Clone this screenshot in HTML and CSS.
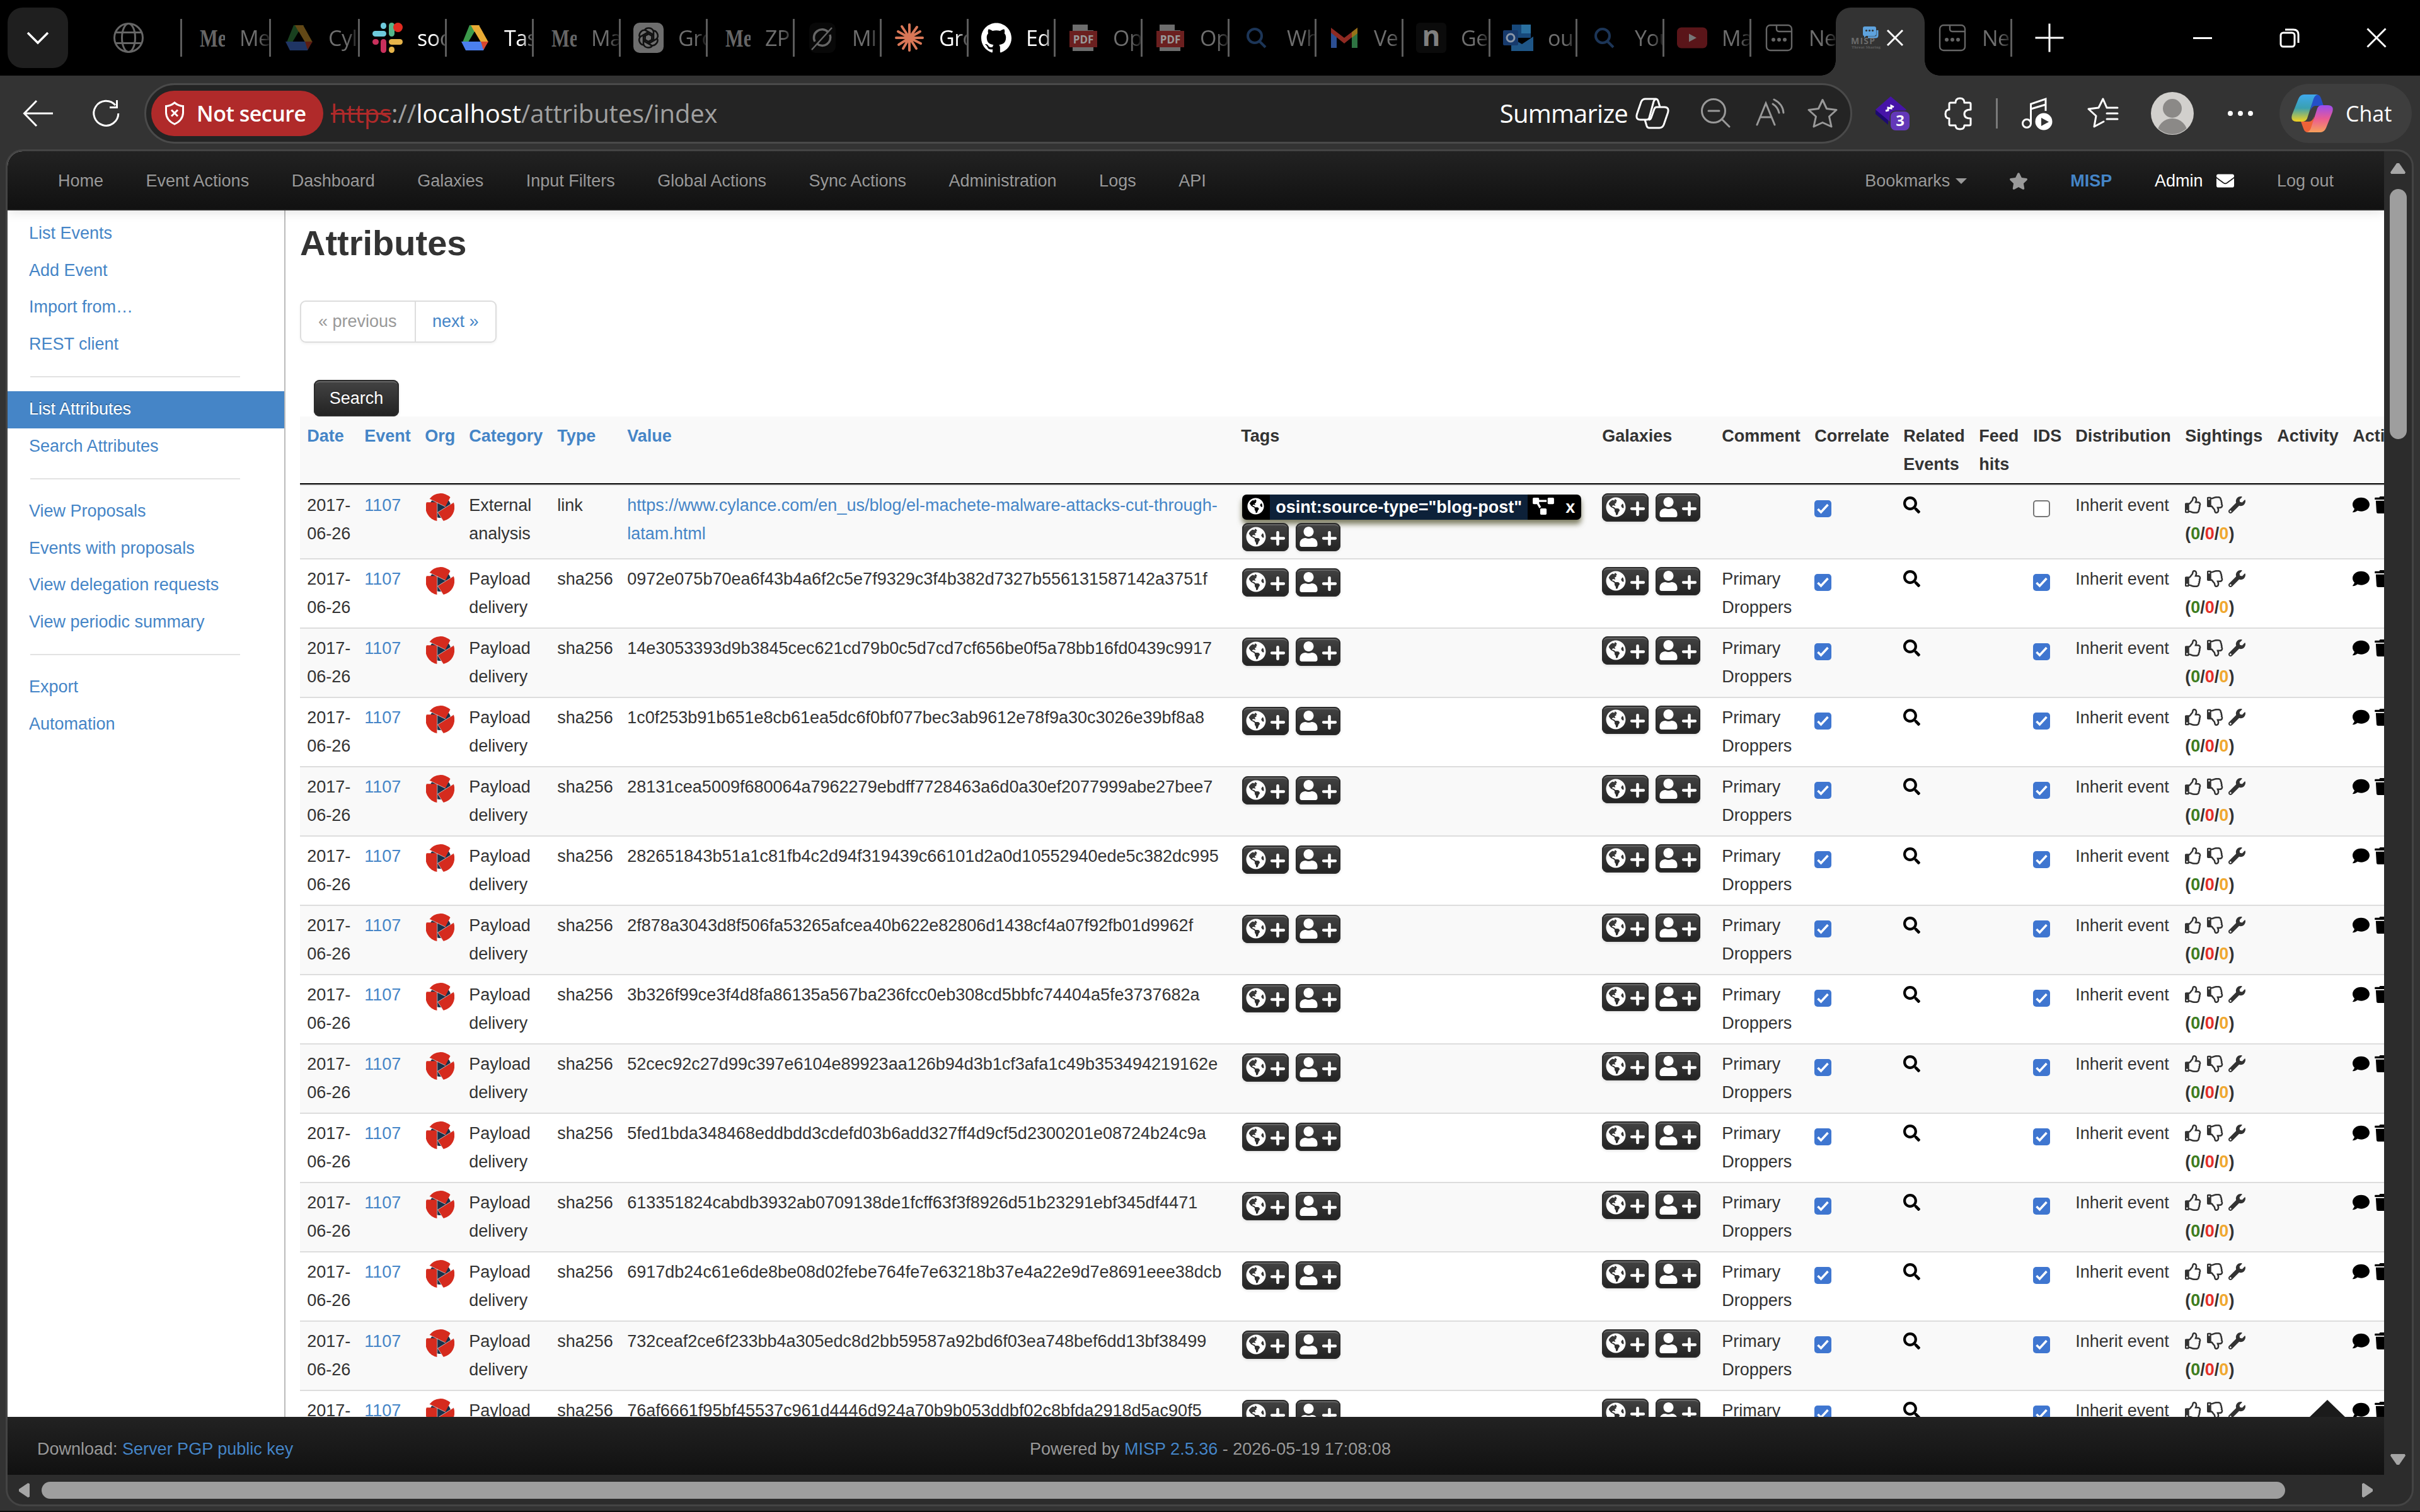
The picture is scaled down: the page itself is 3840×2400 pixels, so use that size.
FILE: index.html
```html
<!DOCTYPE html>
<html lang="en">
<head>
<meta charset="utf-8">
<title>Attributes - MISP</title>
<link rel="stylesheet" href="styles.css">
</head>
<body>
<svg class="defs" aria-hidden="true">
  <symbol id="globe" viewBox="0 0 496 512"><path d="M248 8C111.03 8 0 119.03 0 256s111.03 248 248 248 248-111.03 248-248S384.97 8 248 8zm82.29 357.6c-3.9 3.88-7.99 7.95-11.31 11.28-2.99 3-5.1 6.7-6.17 10.71-1.51 5.66-2.73 11.38-4.77 16.87l-17.39 46.85c-13.76 3-28 4.69-42.65 4.69v-27.38c1.69-12.62-7.64-36.26-22.63-51.25-6-6-9.37-14.14-9.37-22.63v-32.01c0-11.64-6.27-22.34-16.46-27.97-14.37-7.95-34.81-19.06-48.81-26.11-11.48-5.78-22.1-13.14-31.65-21.75l-.8-.72a114.792 114.792 0 0 1-18.06-20.74c-9.38-13.77-24.66-36.42-34.59-51.14 20.47-45.5 57.36-82.04 103.2-101.89l24.01 12.01C203.48 89.74 216 82.01 216 70.11v-11.3c7.99-1.29 16.12-2.11 24.39-2.42l28.3 28.3c6.25 6.25 6.25 16.38 0 22.63L264 112l-10.34 10.34c-3.12 3.12-3.12 8.19 0 11.31l4.69 4.69c3.12 3.12 3.12 8.19 0 11.31l-8 8a8.008 8.008 0 0 1-5.66 2.34h-8.99c-2.08 0-4.08.81-5.58 2.27l-9.92 9.65a8.008 8.008 0 0 0-1.58 9.31l15.59 31.19c2.66 5.32-1.21 11.58-7.15 11.58h-5.64c-1.93 0-3.79-.7-5.24-1.96l-9.28-8.06a16.017 16.017 0 0 0-15.55-3.1l-31.17 10.39a11.95 11.95 0 0 0-8.17 11.34c0 4.53 2.56 8.66 6.61 10.69l11.08 5.54c9.41 4.71 19.79 7.16 30.31 7.16s22.59 27.29 32 32h66.75c8.49 0 16.62 3.37 22.63 9.37l13.69 13.69a30.503 30.503 0 0 1 8.93 21.57 46.536 46.536 0 0 1-13.72 32.98zM417 274.25c-5.79-1.45-10.84-5-14.15-9.97l-17.98-26.97a23.97 23.97 0 0 1 0-26.62l19.59-29.38c2.32-3.47 5.5-6.29 9.24-8.15l12.98-6.49C440.2 193.59 448 223.87 448 256c0 8.67-.74 17.16-1.82 25.54L417 274.25z"/></symbol>
  <symbol id="user" viewBox="0 0 448 512"><path d="M224 256c70.7 0 128-57.3 128-128S294.7 0 224 0 96 57.3 96 128s57.3 128 128 128zm89.6 32h-16.7c-22.2 10.2-46.9 16-72.9 16s-50.6-5.8-72.9-16h-16.7C60.2 288 0 348.2 0 422.4V464c0 26.5 21.5 48 48 48h352c26.5 0 48-21.5 48-48v-41.6c0-74.2-60.2-134.4-134.4-134.4z"/></symbol>
  <symbol id="plus" viewBox="0 0 23 23"><path d="M11.5 2.2v18.6M2.2 11.5h18.6" fill="none" stroke="currentColor" stroke-width="4.6" stroke-linecap="round"/></symbol>
  <symbol id="search" viewBox="0 0 512 512"><path d="M505 442.7L405.3 343c-4.5-4.5-10.6-7-17-7H372c27.6-35.3 44-79.7 44-128C416 93.1 322.9 0 208 0S0 93.1 0 208s93.1 208 208 208c48.3 0 92.7-16.4 128-44v16.3c0 6.4 2.5 12.5 7 17l99.7 99.7c9.4 9.4 24.6 9.4 33.9 0l28.3-28.3c9.4-9.4 9.4-24.6.1-34zM208 336c-70.7 0-128-57.2-128-128 0-70.7 57.2-128 128-128 70.7 0 128 57.2 128 128 0 70.7-57.2 128-128 128z"/></symbol>
  <symbol id="wrench" viewBox="0 0 512 512"><path d="M507.73 109.1c-2.24-9.03-13.54-12.09-20.12-5.51l-74.36 74.36-67.88-11.31-11.31-67.88 74.36-74.36c6.62-6.62 3.43-17.9-5.66-20.16-47.38-11.74-99.55.91-136.58 37.93-39.64 39.64-50.55 97.1-34.05 147.2L18.74 402.76c-24.99 24.99-24.99 65.51 0 90.5 24.99 24.99 65.51 24.99 90.5 0l213.21-213.21c50.12 16.71 107.47 5.68 147.37-34.22 37.07-37.07 49.7-89.32 37.91-136.73zM64 472c-13.25 0-24-10.75-24-24 0-13.26 10.75-24 24-24s24 10.74 24 24c0 13.25-10.75 24-24 24z"/></symbol>
  <symbol id="thumb" viewBox="0 0 512 512"><path d="M466.27 286.69C475.04 271.84 480 256 480 236.85c0-44.015-37.218-85.58-85.82-85.58H357.7c4.92-12.81 8.85-28.13 8.85-46.54C366.55 31.936 328.86 0 271.28 0c-61.607 0-58.093 94.933-71.76 108.6-22.747 22.747-49.615 66.447-68.76 83.4H32c-17.673 0-32 14.327-32 32v240c0 17.673 14.327 32 32 32h64c14.893 0 27.408-10.174 30.978-23.95 44.509 1.001 75.06 39.94 177.802 39.94 7.22 0 15.22.01 22.22.01 77.117 0 111.986-39.423 112.94-95.33 13.319-18.425 20.299-43.122 17.34-66.99 9.854-18.452 13.664-40.343 8.99-62.99zm-61.75 53.83c12.56 21.13 1.26 49.41-13.94 57.57 7.7 48.78-17.608 65.9-53.12 65.9h-37.82c-71.639 0-118.029-37.82-171.64-37.82V240h10.92c28.36 0 67.98-70.89 94.54-97.46 28.36-28.36 18.91-75.63 37.82-94.54 47.27 0 47.27 32.98 47.27 56.73 0 39.17-28.36 56.72-28.36 94.54h103.99c21.11 0 37.73 18.91 37.82 37.82.09 18.9-12.82 37.81-22.27 37.81 13.489 14.555 16.371 45.236-5.21 65.62zM88 432c0 13.255-10.745 24-24 24s-24-10.745-24-24 10.745-24 24-24 24 10.745 24 24z"/></symbol>
  <symbol id="comment" viewBox="0 0 512 512"><path d="M256 32C114.6 32 0 125.1 0 240c0 49.6 21.4 95 57 130.7C44.5 421.1 2.7 466 2.2 466.5c-2.2 2.3-2.8 5.7-1.5 8.7S4.8 480 8 480c66.3 0 116-31.8 140.6-51.4 32.7 12.3 69 19.4 107.4 19.4 141.4 0 256-93.1 256-208S397.4 32 256 32z"/></symbol>
  <symbol id="trash" viewBox="0 0 448 512"><path d="M432 32H312l-9.4-18.7A24 24 0 0 0 281.1 0H166.8a23.72 23.72 0 0 0-21.4 13.3L136 32H16A16 16 0 0 0 0 48v32a16 16 0 0 0 16 16h416a16 16 0 0 0 16-16V48a16 16 0 0 0-16-16zM53.2 467a48 48 0 0 0 47.9 45h245.8a48 48 0 0 0 47.9-45L416 128H32z"/></symbol>
  <symbol id="star" viewBox="0 0 576 512"><path d="M259.3 17.8L194 150.2 47.9 171.5c-26.2 3.8-36.7 36.1-17.7 54.6l105.7 103-25 145.5c-4.5 26.3 23.2 46 46.4 33.7L288 439.6l130.7 68.7c23.2 12.2 50.9-7.4 46.4-33.7l-25-145.5 105.7-103c19-18.5 8.5-50.8-17.7-54.6L382 150.2 316.7 17.8c-11.7-23.6-45.6-23.9-57.4 0z"/></symbol>
  <symbol id="envelope" viewBox="0 0 512 512"><path d="M502.3 190.8c3.9-3.1 9.7-.2 9.7 4.7V400c0 26.5-21.5 48-48 48H48c-26.5 0-48-21.5-48-48V195.6c0-5 5.7-7.8 9.7-4.7 22.4 17.4 52.1 39.5 154.1 113.6 21.1 15.4 56.7 47.8 92.2 47.6 35.7.3 72-32.8 92.3-47.6 102-74.1 131.6-96.3 154-113.7zM256 320c23.2.4 56.6-29.2 73.4-41.4 132.7-96.3 142.8-104.7 173.4-128.7 5.8-4.5 9.2-11.5 9.2-18.9v-19c0-26.5-21.5-48-48-48H48c-26.5 0-48 21.5-48 48v19c0 7.4 3.4 14.3 9.2 18.9 30.6 23.9 40.7 32.4 173.4 128.7 16.8 12.2 50.2 41.8 73.4 41.4z"/></symbol>
  <symbol id="diagram" viewBox="0 0 640 512"><path d="M384 320H256c-17.67 0-32 14.33-32 32v128c0 17.67 14.33 32 32 32h128c17.67 0 32-14.33 32-32V352c0-17.67-14.33-32-32-32zM192 32c0-17.67-14.33-32-32-32H32C14.33 0 0 14.33 0 32v128c0 17.67 14.33 32 32 32h95.72l73.16 128.04C211.98 300.98 232.4 288 256 288h.28L192 175.51V128h224V64H192V32zM608 0H480c-17.67 0-32 14.33-32 32v128c0 17.67 14.33 32 32 32h128c17.67 0 32-14.33 32-32V32c0-17.67-14.33-32-32-32z"/></symbol>
  <symbol id="org" viewBox="0 0 45 45">
    <circle cx="22.500" cy="23" r="17" fill="#17324a"/>
    <g fill="#d52b1e">
      <path d="M5.500 10A22 22 0 0 1 38.500 7.300L30.700 22.300z"/>
      <path d="M.8 15.200H17.500V45A22.300 22.300 0 0 1 .8 15.200z"/>
      <path d="M18.500 31.200L43.800 15.500A22.300 22.300 0 0 1 27.500 45z"/>
    </g>
    <path d="M5.500 10L30.700 22.300M17.800 15.500V45M18.500 31.200L43.800 15.500M18.500 31.200L27.500 45" stroke="#e9e4e4" stroke-width=".7"/>
  </symbol>
  <symbol id="drive" viewBox="0 0 48 48"><path fill="#3fa24f" d="M16 4h16L13 38 5 31z" opacity=".95"/><path fill="#e9ab35" d="M18 4h13l15 27H33z"/><path fill="#4b7fee" d="M3 30h42l-7 14H10z"/><path fill="#d8462f" d="M34 30h12l-8 13z"/><path fill="#000" d="M24 14l9.500 16h-19z"/></symbol>
  <symbol id="slack" viewBox="0 0 48 48"><g fill="#6ecadc"><rect x="13" y="0" width="9" height="10" rx="4.500"/><rect x="0" y="13" width="22" height="9" rx="4.500"/></g><g fill="#56b68b"><rect x="26" y="0" width="9" height="22" rx="4.500"/></g><g fill="#e02b20"><rect x="33" y="0" width="15" height="15" rx="7.500"/></g><g fill="#c9305c"><rect x="0" y="26" width="10" height="9" rx="4.500"/><rect x="13" y="26" width="9" height="22" rx="4.500"/></g><g fill="#e6b44a"><rect x="26" y="26" width="22" height="9" rx="4.500"/><rect x="26" y="38" width="9" height="10" rx="4.500"/></g></symbol>
  <symbol id="gpt" viewBox="0 0 48 48"><rect width="48" height="48" rx="10" fill="#6e6e6e"/><g fill="none" stroke="#111" stroke-width="2.600"><g id="petal"><path d="M18 12c2-5 12-5 14 2v12l-8 4"/></g><use href="#petal" transform="rotate(60 24 24)"/><use href="#petal" transform="rotate(120 24 24)"/><use href="#petal" transform="rotate(180 24 24)"/><use href="#petal" transform="rotate(240 24 24)"/><use href="#petal" transform="rotate(300 24 24)"/></g></symbol>
  <symbol id="grok" viewBox="0 0 48 48"><rect x="3" width="42" height="48" rx="10" fill="#080808"/><g fill="none" stroke="#666" stroke-width="3.500"><path d="M33 15a13 13 0 0 0-21 15M15 33a13 13 0 0 0 21-14"/><path d="M7 43L39 8" stroke-width="2.500"/></g></symbol>
  <symbol id="claude" viewBox="0 0 48 48"><g stroke="#d97757" stroke-width="4" stroke-linecap="round"><path d="M24 24V3M24 24v20M24 24H3M24 24h21M24 24L12 6M24 24L36 7M24 24L6 14M24 24l17-10M24 24L7 35M24 24l18 9M24 24L14 41M24 24l11 17"/></g></symbol>
  <symbol id="github" viewBox="0 0 24 24"><path fill="#fff" d="M12 .297c-6.630 0-12 5.373-12 12 0 5.303 3.438 9.800 8.205 11.385.6.113.82-.258.82-.577 0-.285-.01-1.040-.015-2.040-3.338.724-4.042-1.610-4.042-1.610C4.422 18.070 3.633 17.700 3.633 17.700c-1.087-.744.084-.729.084-.729 1.205.084 1.838 1.236 1.838 1.236 1.070 1.835 2.809 1.305 3.495.998.108-.776.417-1.305.76-1.605-2.665-.3-5.466-1.332-5.466-5.930 0-1.310.465-2.380 1.235-3.220-.135-.303-.54-1.523.105-3.176 0 0 1.005-.322 3.300 1.230.96-.267 1.980-.399 3-.405 1.020.006 2.040.138 3 .405 2.280-1.552 3.285-1.230 3.285-1.230.645 1.653.24 2.873.12 3.176.765.840 1.230 1.910 1.230 3.220 0 4.610-2.805 5.625-5.475 5.920.42.36.81 1.096.81 2.220 0 1.606-.015 2.896-.015 3.286 0 .315.21.69.825.57C20.565 22.092 24 17.592 24 12.297c0-6.627-5.373-12-12-12"/></symbol>
  <symbol id="glass" viewBox="0 0 48 48"><g fill="none" stroke="#1c3557" stroke-width="4"><circle cx="20" cy="21" r="11"/><path d="M28 30l9 9"/></g></symbol>
  <symbol id="gmail" viewBox="0 0 48 48"><path fill="#2c4f93" d="M3 13l9 7v20H3z"/><path fill="#2e7442" d="M36 20l9-7v27h-9z"/><path fill="#8f2a22" d="M3 8l21 16L45 8v8L24 33 3 16z"/><path fill="#967318" d="M36 15l9-7v9l-9 7z"/></symbol>
  <symbol id="outlook" viewBox="0 0 48 48"><path fill="#17487a" d="M14 3h30v21H14z"/><path fill="#2a70a0" d="M29 3h15v14H29z"/><path fill="#1f5687" d="M13 24l17 10 18-12v23H13z"/><rect y="12" width="24" height="24" rx="2" fill="#173a6c"/><circle cx="12" cy="24" r="6" fill="none" stroke="#8b97a8" stroke-width="3"/></symbol>
  <symbol id="youtube" viewBox="0 0 48 48"><rect y="7.500" width="48" height="33" rx="7" fill="#5a1519"/><path fill="#777" d="M19 17.500v13l12-6.500z"/></symbol>
  <symbol id="newtab" viewBox="0 0 48 48"><g fill="none" stroke="#666" stroke-width="2.400"><rect x="4" y="4" width="40" height="40" rx="6"/><path d="M20 4v6q0 4 4 4h20"/></g><g fill="#666"><circle cx="15" cy="27" r="3"/><circle cx="24" cy="27" r="3"/><circle cx="33" cy="27" r="3"/></g></symbol>
</svg>

<header class="tabstrip" id="tabstrip">
  <button class="tab-search" aria-label="Search tabs"><svg width="40" height="26" viewBox="0 0 40 26"><path d="M4 5l16 16L36 5" fill="none" stroke="#fff" stroke-width="3.500"/></svg></button>
  <div class="pinned"><svg width="48" height="48" viewBox="0 0 48 48"><g fill="none" stroke="#666" stroke-width="3"><circle cx="24" cy="24" r="22.500"/><ellipse cx="24" cy="24" rx="10.500" ry="22.500"/><path d="M3.500 15.500h41M3.500 32.500h41"/></g></svg></div>
  <div class="tabs" id="tabs"></div>
  <svg class="new-tab" width="48" height="48" viewBox="0 0 48 48"><path d="M24 1.500v45M1.500 24h45" stroke="#fff" stroke-width="3"/></svg>
  <div class="window-buttons">
    <svg width="32" height="32" viewBox="0 0 32 32"><path d="M1 16.500h30" stroke="#fff" stroke-width="3"/></svg>
    <svg width="32" height="32" viewBox="0 0 32 32"><g fill="none" stroke="#fff" stroke-width="3"><rect x="2" y="8" width="22" height="22" rx="4"/><path d="M9 3h13q8 0 8 8v13"/></g></svg>
    <svg width="32" height="32" viewBox="0 0 32 32"><path d="M1.500 1.500l29 29M30.500 1.500l-29 29" stroke="#fff" stroke-width="3"/></svg>
  </div>
</header>

<div class="toolbar">
  <svg width="48" height="48" viewBox="0 0 48 48"><path d="M22 4L2.500 24 22 44M2.500 24H48" fill="none" stroke="#fff" stroke-width="3"/></svg>
  <svg class="reload" width="48" height="48" viewBox="0 0 48 48"><path d="M39 11A19.500 19.500 0 1 0 43.800 24M41.500 3v11.500H30" fill="none" stroke="#fff" stroke-width="3"/></svg>
  <div class="address">
    <div class="insecure"><svg width="34" height="38" viewBox="0 0 34 38"><path d="M17 2q6 5 13.500 5.500V18Q30 30 17 36 4 30 3.500 18V7.500Q11 7 17 2zM12 13.500l10 10M22 13.500l-10 10" fill="none" stroke="#fff" stroke-width="3"/></svg><span>Not secure</span></div>
    <div class="url"><span class="scheme">https</span>://<span class="host">localhost</span>/attributes/index</div>
    <div class="summarize"><span>Summarize</span>
      <svg width="54" height="50" viewBox="0 0 54 50"><g fill="none" stroke="#fff" stroke-width="3" stroke-linejoin="round"><path d="M16 2H32q3 0 4 3l3 10M16 2Q11 2 9 7L2.500 26Q0 35 8 35H18q3 0 4-3L29 6q1-3 4-4"/><path d="M38 48H22q-3 0-4-3l-3-10M38 48q5 0 7-5l6.500-19Q54 15 46 15H34q-3 0-4 3L25 32q-1 3-4 3"/></g></svg>
    </div>
    <svg class="zoom" width="48" height="48" viewBox="0 0 48 48"><g fill="none" stroke="#999" stroke-width="3"><circle cx="21" cy="20" r="18.500"/><path d="M13 20h17M34 33l12 12" stroke-linecap="round"/></g></svg>
    <svg class="read" width="48" height="48" viewBox="0 0 48 48"><g fill="none" stroke="#999" stroke-width="3" stroke-linecap="round"><path d="M2 42L16 8l14 34M7 30h18M27 9q8 5 10 14M29 2q14 7 15 21"/></g></svg>
    <svg class="fav" width="48" height="48" viewBox="0 0 48 48"><path d="M24 2.500l6.500 14 15.500 2-11.500 10.500 3.500 16L24 38.500 10 45l3.500-16L2 18.500l15.500-2z" fill="none" stroke="#999" stroke-width="3" stroke-linejoin="round"/></svg>
  </div>
  <svg class="ext" width="58" height="54" viewBox="0 0 58 54"><path fill="#1d0a70" d="M1 21v7l20 17V36z"/><path fill="#4614a8" d="M25 0l25 21-24 21L1 21z"/><path d="M17 23l4-1 0-4 5 1 0-4 4 2" fill="none" stroke="#fff" stroke-width="3"/><rect x="23.500" y="22.500" width="33" height="33" rx="9" fill="#333"/><rect x="25" y="24" width="30" height="30" rx="8" fill="#6338b8"/><text x="40" y="47" class="badge-text">3</text></svg>
  <svg class="puzzle" width="48" height="54" viewBox="0 0 48 54"><path d="M12 10h8q0-7 7-7t7 7h8q2 0 2 2v9q-10 0-10 7t10 7v9q0 2-2 2H34q0 6-7 6t-7-6H12q-2 0-2-2V35q-6 0-6-7t6-7V12q0-2 2-2z" fill="none" stroke="#fff" stroke-width="3" stroke-linejoin="round"/></svg>
  <i class="divider"></i>
  <svg class="music" width="54" height="54" viewBox="0 0 54 54"><g fill="none" stroke="#fff" stroke-width="3"><circle cx="10" cy="43" r="6.500"/><path d="M16.500 43V12L40 4V23M16.500 20L40 13"/></g><circle cx="37" cy="40" r="13.500" fill="#fff"/><path fill="#333" d="M33 34v13l12-6.500z"/></svg>
  <svg class="favlist" width="54" height="54" viewBox="0 0 54 54"><g fill="none" stroke="#fff" stroke-width="3" stroke-linecap="round" stroke-linejoin="round"><path d="M33 18L27 4 20 18 4 20 16 31 13 48 28 40M33 18H50M33 27H50M33 36H50"/></g></svg>
  <svg class="avatar" width="68" height="68" viewBox="0 0 68 68"><clipPath id="avatarClip"><circle cx="34" cy="34" r="33"/></clipPath><circle cx="34" cy="34" r="34" fill="#d2d0cd"/><g fill="#8b8987" clip-path="url(#avatarClip)"><circle cx="34" cy="26" r="15"/><circle cx="34" cy="66" r="24"/></g></svg>
  <svg class="dots" width="42" height="10" viewBox="0 0 42 10"><g fill="#fff"><circle cx="5" cy="5" r="4"/><circle cx="21" cy="5" r="4"/><circle cx="37" cy="5" r="4"/></g></svg>
  <div class="chat">
    <svg width="66" height="60" viewBox="0 0 66 60"><defs><linearGradient id="cpA" x1="0" y1="0" x2="0" y2="1"><stop offset="0" stop-color="#3fa9ee"/><stop offset=".5" stop-color="#3aa0b0"/><stop offset="1" stop-color="#f4d21f"/></linearGradient><linearGradient id="cpB" x1="0" y1="0" x2="0" y2="1"><stop offset="0" stop-color="#9a4df0"/><stop offset=".5" stop-color="#ea5b93"/><stop offset="1" stop-color="#f7a05a"/></linearGradient></defs><path fill="#2450c8" d="M34 0h6q5 0 7 6l4 12H38q-5 0-8 8z"/><path fill="#ee6238" d="M32 60h-6q-5 0-7-6l-4-11h13q5 0 8-8z"/><path fill="url(#cpA)" d="M20 0h22q-5 1-7 7L25 38q-2 5-8 5H8Q-2 43 1 32L11 7q3-7 9-7z"/><path fill="url(#cpB)" d="M46 60H24q5-1 7-7l10-31q2-5 8-5h9q10 0 7 11L55 53q-3 7-9 7z"/></svg>
    <span>Chat</span>
  </div>
</div>

<div class="frame">
  <div class="viewport">
    <nav class="topnav">
      <a>Home</a><a>Event Actions</a><a>Dashboard</a><a>Galaxies</a><a>Input Filters</a><a>Global Actions</a><a>Sync Actions</a><a>Administration</a><a>Logs</a><a>API</a>
      <span class="spacer"></span>
      <a class="bookmarks">Bookmarks<i class="caret"></i></a>
      <a class="nav-star"><svg width="30" height="27"><use href="#star"/></svg></a>
      <a class="brand">MISP</a>
      <a class="admin">Admin<svg width="28" height="28"><use href="#envelope"/></svg></a>
      <a>Log out</a>
    </nav>
    <div class="main">
      <aside class="sidebar">
        <a>List Events</a><a>Add Event</a><a>Import from…</a><a>REST client</a>
        <hr>
        <a class="active">List Attributes</a><a>Search Attributes</a>
        <hr>
        <a>View Proposals</a><a>Events with proposals</a><a>View delegation requests</a><a>View periodic summary</a>
        <hr>
        <a>Export</a><a>Automation</a>
      </aside>
      <main class="content">
        <h2>Attributes</h2>
        <div class="pagination"><span>« previous</span><a>next »</a></div>
        <button class="btn search-btn">Search</button>
        <table class="attributes">
          <colgroup><col class="c-date"><col class="c-event"><col class="c-org"><col class="c-category"><col class="c-type"><col class="c-value"><col class="c-tags"><col class="c-galaxies"><col class="c-comment"><col class="c-correlate"><col class="c-related"><col class="c-feed"><col class="c-ids"><col class="c-distribution"><col class="c-sightings"><col class="c-activity"><col class="c-actions"></colgroup>
          <thead><tr><th><a>Date</a></th><th><a>Event</a></th><th><a>Org</a></th><th><a>Category</a></th><th><a>Type</a></th><th><a>Value</a></th><th>Tags</th><th>Galaxies</th><th>Comment</th><th>Correlate</th><th>Related<br>Events</th><th>Feed<br>hits</th><th>IDS</th><th>Distribution</th><th>Sightings</th><th>Activity</th><th>Actions</th></tr></thead>
          <tbody id="rows"></tbody>
        </table>
      </main>
    </div>
    <footer class="footer">
      <div>Download: <a>Server PGP public key</a></div>
      <div class="powered">Powered by <a>MISP 2.5.36</a> - 2026-05-19 17:08:08</div>
    </footer>
    <i class="to-top"></i>
  </div>
  <div class="vscroll"><i class="arrow up"></i><i class="vthumb"></i><i class="arrow down"></i></div>
  <div class="hscroll"><i class="arrow left"></i><i class="hthumb"></i><i class="arrow right"></i></div>
</div>
<script src="script.js"></script>
</body>
</html>
```
FILE: styles.css
```css
* { box-sizing: border-box; }

html, body { height: 100%; }

body {
  margin: 0;
  display: flex;
  flex-direction: column;
  overflow: hidden;
  background: #333;
  border-bottom: 2px solid #0c0c0c;
  font-family: "Liberation Sans", Arial, sans-serif;
  font-size: 27px;
  line-height: 45px;
  color: #333;
}

svg { display: block; flex: none; fill: currentColor; }
.defs { position: absolute; width: 0; height: 0; }
button { border: 0; padding: 0; font: inherit; }
a { color: #4585c7; text-decoration: none; }

/* Tab strip */
.tabstrip {
  display: flex;
  flex: none;
  align-items: center;
  height: 120px;
  background: #000;
  font-family: "Open Sans", "Noto Sans", sans-serif;
}
.tab-search {
  display: flex;
  align-items: center;
  justify-content: center;
  width: 96px;
  height: 96px;
  margin-left: 12px;
  border-radius: 24px;
  background: #1f1f1f;
}
.pinned { display: flex; width: 178px; padding-left: 72px; }
.pinned + .tabs { border-left: 3px solid #5c5c5c; }
.tabs { display: flex; align-items: center; height: 60px; }
.tab {
  display: flex;
  flex: none;
  align-items: center;
  gap: 23px;
  width: 138px;
  height: 60px;
  padding-left: 20px;
  border-right: 3px solid #5c5c5c;
  color: #6e6e6e;
}
.tab svg { width: 48px; height: 48px; }
.tab > span {
  flex: 1;
  overflow: hidden;
  white-space: nowrap;
  font-size: 34px;
  letter-spacing: -.5px;
  -webkit-mask-image: linear-gradient(90deg, #000 62%, rgba(0, 0, 0, .25));
  mask-image: linear-gradient(90deg, #000 62%, rgba(0, 0, 0, .25));
}
.tab.wide { width: 141px; }
.tab.awake { color: #fff; }
.tab.dim svg { opacity: .42; }
.tab.before-active { width: 134px; border-right: 0; }
.tab.after-active { width: 139px; }
.tab.active {
  position: relative;
  width: 141px;
  height: 108px;
  margin-top: 12px;
  padding: 0 0 12px 24px;
  gap: 8px;
  border: 0;
  border-radius: 24px 24px 0 0;
  background: #333;
}
.tab.active .close { width: 28px; height: 28px; }
.tab.active::before, .tab.active::after {
  content: "";
  position: absolute;
  bottom: 0;
  width: 24px;
  height: 24px;
}
.tab.active::before { left: -24px; background: radial-gradient(circle at 0 0, transparent 23.500px, #333 24px); }
.tab.active::after { right: -24px; background: radial-gradient(circle at 100% 0, transparent 23.500px, #333 24px); }
.fav-medium { font: bold 40px "Liberation Serif", serif; fill: #666; }
.fav-pdf { font: bold 17px "Open Sans", sans-serif; fill: #999; text-anchor: middle; }
.fav-n { font: bold 44px "Open Sans", sans-serif; fill: #808080; text-anchor: middle; }
.fav-misp { font: bold 14px "Open Sans", sans-serif; fill: #6a6a6a; }
.fav-misp-sub { font: bold 6.500px "Liberation Serif", serif; fill: #606060; }
.new-tab { margin-left: 35px; }
.window-buttons { display: flex; gap: 106px; margin-left: auto; padding-right: 53px; }

/* Toolbar */
.toolbar {
  display: flex;
  flex: none;
  align-items: center;
  height: 117px;
  padding: 3px 0 0 36px;
  color: #fff;
  font-family: "Open Sans", "Noto Sans", sans-serif;
}
.reload { margin-left: 60px; }
.address {
  display: flex;
  flex: none;
  align-items: center;
  width: 2710px;
  height: 96px;
  margin-left: 37px;
  padding: 0 20px 0 8px;
  border: 3px solid #4a4a4a;
  border-radius: 48px;
  background: #242424;
}
.insecure {
  display: flex;
  align-items: center;
  gap: 18px;
  width: 273px;
  height: 72px;
  padding-left: 20px;
  border-radius: 36px;
  background: #b02a2a;
  font-size: 34px;
  font-weight: 600;
  letter-spacing: -.5px;
  white-space: nowrap;
}
.url { margin: -2px 0 0 12px; font-size: 40px; letter-spacing: -.130px; color: #a0a0a0; }
.scheme { color: #b02a2a; text-decoration: line-through; text-decoration-thickness: 3px; }
.host { color: #fff; }
.summarize { display: flex; align-items: center; gap: 12px; margin-left: auto; font-size: 40px; letter-spacing: -.8px; }
.summarize span { margin-top: -2px; }
.zoom { margin-left: 49px; }
.read { margin-left: 40px; }
.fav { margin-left: 34px; }
.ext { margin-left: 36px; }
.badge-text { font: bold 24px "Open Sans", sans-serif; fill: #fff; text-anchor: middle; }
.puzzle { margin-left: 50px; }
.divider { width: 3px; height: 48px; margin-left: 36px; background: #7a7a7a; }
.music { margin-left: 36px; }
.favlist { margin-left: 50px; }
.avatar { margin-left: 49px; }
.dots { margin-left: 53px; }
.chat {
  display: flex;
  flex: none;
  align-items: center;
  gap: 20px;
  width: 210px;
  height: 94px;
  margin-left: 41px;
  padding-left: 19px;
  border-radius: 47px;
  background: #3e3e3e;
  font-size: 34px;
}

/* Page frame and scrollbars */
.frame {
  display: grid;
  flex: none;
  grid-template: 2101px 47px / 3771px 44px;
  width: 3821px;
  height: 2154px;
  margin-left: 9px;
  border: 3px solid #444;
  border-radius: 27px;
  overflow: hidden;
  background: #2c2c2c;
}
.vscroll { display: flex; flex-direction: column; align-items: center; grid-row: 1; grid-column: 2; padding: 19px 0 16px 0; }
.vthumb { width: 27px; height: 397px; margin-top: 24px; border-radius: 14px; background: #9e9e9e; }
.arrow { background: #a6a6a6; }
.up { width: 24px; height: 17px; clip-path: polygon(42% 0, 58% 0, 100% 85%, 95% 100%, 5% 100%, 0 85%); }
.down { width: 24px; height: 17px; margin-top: auto; clip-path: polygon(42% 100%, 58% 100%, 100% 15%, 95% 0, 5% 0, 0 15%); }
.hscroll { display: flex; align-items: center; grid-row: 2; padding: 2px 18px 0 18px; }
.left { width: 17px; height: 23px; clip-path: polygon(0 42%, 0 58%, 85% 100%, 100% 95%, 100% 5%, 85% 0); }
.right { width: 17px; height: 23px; margin-left: auto; clip-path: polygon(100% 42%, 100% 58%, 15% 100%, 0 95%, 0 5%, 15% 0); }
.hthumb { width: 3560px; height: 27px; margin-left: 19px; border-radius: 14px; background: #9e9e9e; }
.viewport { position: relative; display: flex; flex-direction: column; height: 2101px; background: #fff; overflow: hidden; }

/* Top navigation */
.topnav {
  display: flex;
  flex: none;
  align-items: center;
  gap: 67.500px;
  height: 94px;
  padding: 2px 80px 0 80px;
  border-bottom: 2px solid #252525;
  background: linear-gradient(#222, #111);
  box-shadow: 0 2px 18px rgba(0, 0, 0, .12);
  z-index: 1;
  text-shadow: 0 -2px 0 rgba(0, 0, 0, .25);
  white-space: nowrap;
}
.topnav a { display: flex; align-items: center; color: #999; }
.spacer { flex: 1; margin-right: -67.500px; }
.caret { margin: 0 -1px 0 9px; border: 9px solid transparent; border-top-color: #999; border-bottom: 0; }
.topnav .brand { color: #4585c7; font-weight: bold; }
.topnav .admin { color: #fff; }
.admin svg { margin-left: 22px; }

/* Side menu */
.main { display: flex; flex: 1; min-height: 0; overflow: hidden; }
.sidebar { flex: none; width: 441px; padding-top: 8px; border-right: 2px solid #bbb; }
.sidebar a { display: block; height: 58.500px; padding-left: 34px; line-height: 57px; }
.sidebar .active { background: #4585c7; color: #fff; text-shadow: 0 -2px 0 rgba(0, 0, 0, .25); }
.sidebar hr { width: 333px; height: 2px; margin: 20.500px 0 22.500px 36px; border: 0; background: #e2e2e2; }

/* Attribute index */
.content { flex: none; width: 3330px; padding: 7px 0 0 23px; }
h2 { margin: 0 0 46px; font-size: 56px; line-height: 90px; }
.pagination {
  display: flex;
  width: 312px;
  height: 67px;
  border: 2px solid #ddd;
  border-radius: 9px;
  box-shadow: 0 2px 4px rgba(0, 0, 0, .05);
  line-height: 63px;
  white-space: nowrap;
}
.pagination span { width: 182px; padding-left: 27px; border-right: 2px solid #ddd; color: #999; }
.pagination a { padding-left: 26px; }
.btn {
  border-radius: 9px;
  background: linear-gradient(#444, #222);
  box-shadow: inset 0 0 0 2px #2b2b2b, inset 0 4px 0 rgba(255, 255, 255, .18), 0 2px 4px rgba(0, 0, 0, .1);
  color: #fff;
  text-shadow: 0 -2px 0 rgba(0, 0, 0, .25);
}
.search-btn { display: block; width: 135px; height: 58px; margin: 59px 0 0 22px; }

.attributes { width: 3308px; table-layout: fixed; border-collapse: separate; border-spacing: 0; }
.c-date { width: 91px; }
.c-event { width: 96px; }
.c-org { width: 70px; }
.c-category { width: 140px; }
.c-type { width: 111px; }
.c-value { width: 974px; }
.c-tags { width: 573px; }
.c-galaxies { width: 190px; }
.c-comment { width: 147px; }
.c-correlate { width: 141px; }
.c-related { width: 120px; }
.c-feed { width: 86px; }
.c-ids { width: 67px; }
.c-distribution { width: 174px; }
.c-sightings { width: 146px; }
.c-activity { width: 120px; }
.c-actions { width: 162px; }
th, td { padding: 9px 0 9px 11.250px; text-align: left; vertical-align: top; white-space: nowrap; }
th { height: 108px; padding-bottom: 7px; border-bottom: 2px solid #000; background: #f9f9f9; }
td { height: 110px; border-top: 2px solid #ddd; }
tbody tr:first-child td { height: 117px; }
tbody tr:nth-child(odd) { background: #f9f9f9; }

.org { width: 45px; height: 45px; margin: 2px 0 0 2px; }
.buttons { display: flex; gap: 11px; padding-top: 3px; }
.in-tags { padding: 5px 0 0 2px; }
.mini { display: flex; flex: none; align-items: center; gap: 7px; width: 74px; height: 45px; padding: 0 0 1px 6px; }
.mini.local { width: 71px; gap: 7px; }
.mini svg:first-child { width: 32px; height: 32px; }
.mini.local svg:first-child { width: 29px; }
.mini svg:last-child { width: 23px; height: 23px; margin-top: 5px; }
.tag {
  display: flex;
  align-items: center;
  width: 538px;
  height: 40px;
  margin: 5px 0 0 2px;
  border-radius: 7px;
  background: #000;
  box-shadow: 0 7px 9px rgba(85, 85, 50, .75);
  color: #fff;
  font-weight: bold;
  line-height: 40px;
}
.tag svg:first-child { width: 27px; height: 27px; margin: 0 9px 3px 8px; }
.tag .name { width: 409px; padding-left: 9px; background: #0d2139; }
.tag svg { margin: 0 18px 3px 8px; }
.check {
  display: block;
  width: 27px;
  height: 27px;
  margin: 14px 0 0;
  border: 2px solid #767676;
  border-radius: 5px;
  background: #fff;
}
.check.on { border: 0; background: #3f76d0; }
.icons { display: flex; gap: 7.500px; padding-top: 8px; height: 45px; color: #333; }
.icons svg { width: 27px; height: 27px; }
.icons.black { color: #000; }
.icons .trash { width: 24px; }
.icons .down-vote { transform: scaleY(-1); }
.score { display: block; font-weight: bold; }
.pos { color: #3d7d20; }
.neg { color: #e52f28; }
.exp { color: #f0a830; }

/* Footer */
.footer {
  display: flex;
  flex: none;
  height: 92px;
  padding: 29px 0 0 47px;
  background: linear-gradient(#222, #111);
  color: #999;
  white-space: nowrap;
  text-shadow: 0 -2px 0 rgba(0, 0, 0, .25);
}
.footer div { width: 1575px; }
.to-top {
  position: absolute;
  right: 62px;
  bottom: 92px;
  width: 56px;
  height: 27px;
  background: #1b1b1b;
  clip-path: polygon(50% 0, 100% 100%, 0 100%);
}
```
FILE: script.js
```js
const use = (id, cls = "") => `<svg class="${cls}"><use href="#${id}"/></svg>`;

// Favicons that carry lettering
const lettered = {
  medium: `<text transform="translate(8 38) scale(.76 1)" class="fav-medium">Me</text>`,
  pdf: `<path fill="#6d6d6d" d="M7 3h24l9 9v33H7z"/><path fill="#000" d="M31 2v10h11z"/><rect x="2" y="13" width="44" height="26" fill="#6b1f1f"/><text x="24" y="32.500" class="fav-pdf">PDF</text>`,
  nlet: `<rect width="48" height="48" rx="6" fill="#0b0b0b"/><text x="24" y="37" class="fav-n">n</text>`,
  misp: `<path fill="#5ea3de" d="M22 6h15q3 0 3 3v9q0 3-3 3H24l-3 3v-3q-2 0-2-3V9q0-3 3-3z"/><path fill="none" stroke="#5ea3de" stroke-width="3" d="M42 12v8q0 3-3 3H27"/><g fill="#333"><circle cx="24.500" cy="12.500" r="1.600"/><circle cx="29.500" cy="12.500" r="1.600"/><circle cx="34.500" cy="12.500" r="1.600"/></g><text x="0" y="34" class="fav-misp" textLength="38">MISP</text><text x="1" y="41" class="fav-misp-sub" textLength="46">Threat Sharing</text>`
};
const favicon = id => lettered[id] ? `<svg viewBox="0 0 48 48">${lettered[id]}</svg>` : use(id);

// Browser tabs: icon, title, modifier classes
const tabs = [
  ["medium", "Me", "wide"],
  ["drive", "Cyl", "wide dim"],
  ["slack", "soc", "awake"],
  ["drive", "Tas", "awake"],
  ["medium", "Ma", ""],
  ["gpt", "Gro", ""],
  ["medium", "ZP", ""],
  ["grok", "MI", ""],
  ["claude", "Gro", "awake"],
  ["github", "Ed", "awake"],
  ["pdf", "Op", ""],
  ["pdf", "Op", ""],
  ["glass", "Wh", ""],
  ["gmail", "Ve", ""],
  ["nlet", "Ge", ""],
  ["outlook", "ou", ""],
  ["glass", "You", ""],
  ["youtube", "Ma", ""],
  ["newtab", "Ne", "before-active"],
  ["misp", null, "active"],
  ["newtab", "Ne", "after-active"]
];
const closeIcon = `<svg class="close" viewBox="0 0 28 28"><path d="M2 2l24 24M26 2L2 26" stroke="#fff" stroke-width="3"/></svg>`;
document.getElementById("tabs").innerHTML = tabs.map(([icon, title, cls]) =>
  `<div class="tab ${cls}">${favicon(icon)}${title ? `<span>${title}</span>` : closeIcon}</div>`).join("");

const hashes = [
  "0972e075b70ea6f43b4a6f2c5e7f9329c3f4b382d7327b556131587142a3751f",
  "14e3053393d9b3845cec621cd79b0c5d7cd7cf656be0f5a78bb16fd0439c9917",
  "1c0f253b91b651e8cb61ea5dc6f0bf077bec3ab9612e78f9a30c3026e39bf8a8",
  "28131cea5009f680064a7962279ebdff7728463a6d0a30ef2077999abe27bee7",
  "282651843b51a1c81fb4c2d94f319439c66101d2a0d10552940ede5c382dc995",
  "2f878a3043d8f506fa53265afcea40b622e82806d1438cf4a07f92fb01d9962f",
  "3b326f99ce3f4d8fa86135a567ba236fcc0eb308cd5bbfc74404a5fe3737682a",
  "52cec92c27d99c397e6104e89923aa126b94d3b1cf3afa1c49b353494219162e",
  "5fed1bda348468eddbdd3cdefd03b6add327ff4d9cf5d2300201e08724b24c9a",
  "613351824cabdb3932ab0709138de1fcff63f3f8926d51b23291ebf345df4471",
  "6917db24c61e6de8be08d02febe764fe7e63218b37e4a22e9d7e8691eee38dcb",
  "732ceaf2ce6f233bb4a305edc8d2bb59587a92bd6f03ea748bef6dd13bf38499",
  "76af6661f95bf45537c961d4446d924a70b9b053ddbf02c8bfda2918d5ac90f5"
];

const addButtons = cls => `<div class="buttons ${cls}"><div class="btn mini">${use("globe")}${use("plus")}</div><div class="btn mini local">${use("user")}${use("plus")}</div></div>`;
const check = on => `<span class="check ${on ? "on" : ""}">${on ? '<svg width="27" height="27" viewBox="0 0 27 27"><path d="M5.500 14l5 5L21.500 7" fill="none" stroke="#fff" stroke-width="3.500"/></svg>' : ""}</span>`;
const tag = `<div class="tag">${use("globe")}<span class="name">osint:source-type="blog-post"</span><svg width="34" height="27"><use href="#diagram"/></svg>x</div>`;

const row = r => `<tr>
  <td>2017-<br>06-26</td>
  <td><a>1107</a></td>
  <td>${use("org", "org")}</td>
  <td>${r.category}</td>
  <td>${r.type}</td>
  <td>${r.value}</td>
  <td>${r.tag || ""}${addButtons("in-tags")}</td>
  <td>${addButtons("")}</td>
  <td>${r.comment}</td>
  <td>${check(true)}</td>
  <td><div class="icons black">${use("search")}</div></td>
  <td></td>
  <td>${check(r.ids)}</td>
  <td>Inherit event</td>
  <td><div class="icons">${use("thumb")}${use("thumb", "down-vote")}${use("wrench")}</div><span class="score">(<span class="pos">0</span>/<span class="neg">0</span>/<span class="exp">0</span>)</span></td>
  <td></td>
  <td><div class="icons black">${use("comment")}${use("trash", "trash")}</div></td>
</tr>`;

const rows = [{
  category: "External<br>analysis",
  type: "link",
  value: "<a>https://www.cylance.com/en_us/blog/el-machete-malware-attacks-cut-through-<br>latam.html</a>",
  tag,
  comment: "",
  ids: false
}, ...hashes.map(value => ({
  category: "Payload<br>delivery",
  type: "sha256",
  value,
  comment: "Primary<br>Droppers",
  ids: true
}))];
document.getElementById("rows").innerHTML = rows.map(row).join("");
```
